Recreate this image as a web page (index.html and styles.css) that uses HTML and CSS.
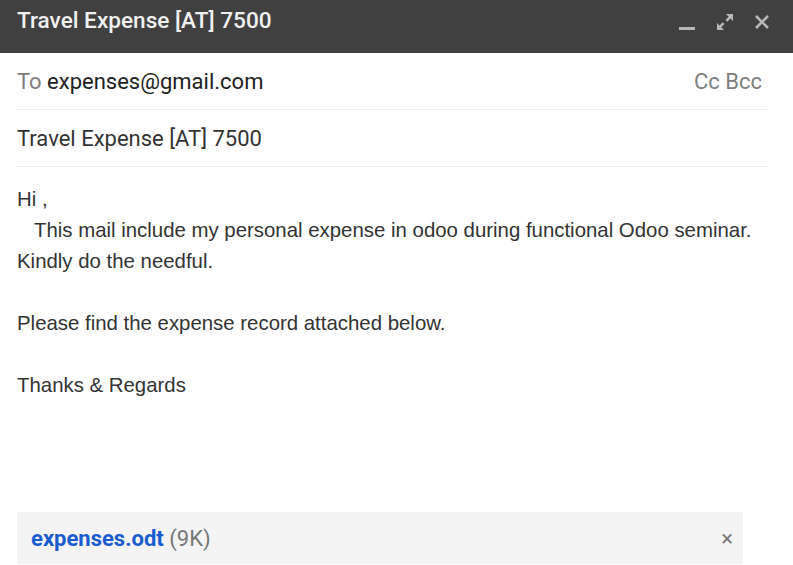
FILE: index.html
```html
<!DOCTYPE html>
<html lang="en">
<head>
  <meta charset="UTF-8" />
  <meta name="viewport" content="width=device-width, initial-scale=1.0" />
  <title>Travel Expense [AT] 7500</title>
  <link rel="stylesheet" href="styles.css">
</head>
<body>
  <div class="compose">
    <div class="titlebar">
      <span class="title">Travel Expense [AT] 7500</span>
      <div class="controls">
        <svg width="17" height="17" viewBox="0 0 17 17"><rect x="0" y="13" width="16" height="3" fill="currentColor"/></svg>
        <svg width="18" height="18" viewBox="0 0 18 18" fill="currentColor">
          <path d="M10 1h7v7l-2.5-2.5-3.2 3.2-1.8-1.8 3.2-3.2z"/>
          <path d="M8 17H1v-7l2.5 2.5 3.2-3.2 1.8 1.8-3.2 3.2z"/>
        </svg>
        <svg width="16" height="16" viewBox="0 0 16 16" stroke="currentColor" stroke-width="2.6"><path d="M2 2l12 12M14 2L2 14"/></svg>
      </div>
    </div>

    <div class="field">
      <span><span class="label">To</span> expenses@gmail.com</span>
      <span class="label">Cc Bcc</span>
    </div>
    <div class="field subject">Travel Expense [AT] 7500</div>

    <div class="message">
      <p>Hi ,<br>&nbsp;&nbsp;&nbsp;This mail include my personal expense in odoo during functional Odoo seminar.<br>Kindly do the needful.</p>
      <p>Please find the expense record attached below.</p>
      <p>Thanks &amp; Regards</p>
    </div>

    <div class="attachment">
      <span><a class="file" href="#">expenses.odt</a> <span class="size">(9K)</span></span>
      <span class="remove">&#215;</span>
    </div>
  </div>
</body>
</html>
```

FILE: styles.css
```css
body {
  margin: 0;
  background: #fff;
  font-family: Roboto, "Liberation Sans", sans-serif;
}

.compose {
  width: 793px;
  height: 565px;
  overflow: hidden;
}

.titlebar {
  height: 53px;
  background: #404040;
  display: flex;
  align-items: flex-start;
  justify-content: space-between;
  padding: 7px 23px 0 17px;
  box-sizing: border-box;
}

.title {
  color: #f0f0f0;
  font-size: 22.6px;
  line-height: 27px;
  font-weight: 500;
}

.controls {
  display: flex;
  align-items: center;
  gap: 20px;
  margin-top: 6px;
  color: #b8b8b8;
}

.field {
  margin: 0 25px 0 17px;
  height: 56px;
  border-bottom: 1px solid #ececec;
  display: flex;
  align-items: center;
  justify-content: space-between;
  font-size: 22px;
  color: #222;
}

.field .label {
  color: #808080;
}

.field > .label {
  margin-right: 6px;
}

.subject {
  color: #333;
}

.message {
  margin: 17px 17px 0;
  font-family: "Liberation Sans", Arial, sans-serif;
  font-size: 20.4px;
  line-height: 31px;
  color: #333;
  height: 328px;
}

.message p {
  margin: 0 0 31px;
}

.attachment {
  margin: 0 50px 0 17px;
  height: 52px;
  background: #f4f4f4;
  display: flex;
  align-items: center;
  justify-content: space-between;
  padding: 0 10px 0 14px;
  font-size: 22px;
}

.file {
  color: #1a5ccf;
  font-weight: 700;
  text-decoration: none;
}

.size {
  color: #777;
}

.remove {
  color: #777;
  font-size: 22px;
}
```
